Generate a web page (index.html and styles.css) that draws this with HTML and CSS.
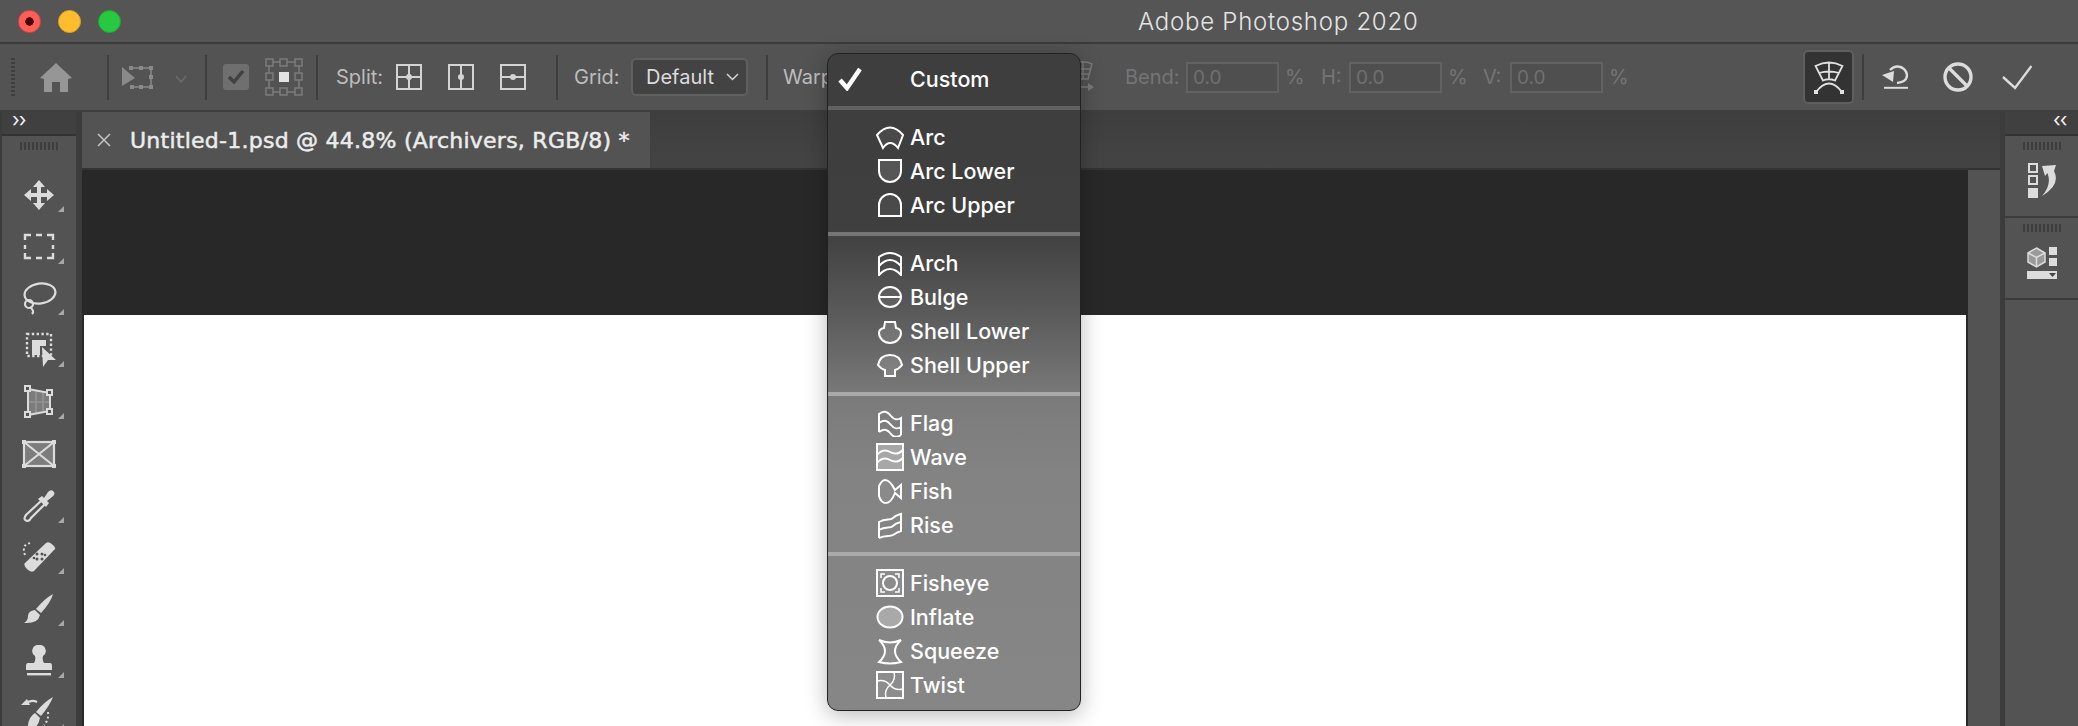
FILE: index.html
```html
<!DOCTYPE html>
<html lang="en">
<head>
    <meta charset="UTF-8">
    <title>Adobe Photoshop 2020</title>
    <link rel="stylesheet" href="styles.css">
</head>
<body>
    <div class="app">
        <header class="titlebar">
            <div class="lights">
                <span class="light red"></span>
                <span class="light yellow"></span>
                <span class="light green"></span>
            </div>
            <div class="app-title">Adobe Photoshop 2020</div>
        </header>

        <div class="options">
            <span class="grip-v"></span>
            <svg class="opt-home" width="32" height="29" viewBox="0 0 32 29"><path fill="#969696" d="M16 0 32 15 28 16V29H20V19H12V29H4V16L0 15Z"/></svg>
            <span class="sep sep-home"></span>
            <svg class="opt-transform" width="31" height="25" viewBox="0 0 31 25"><g fill="none" stroke="#8a8a8a" stroke-width="1.5"><path d="M9 3H29V22H9"/></g><g fill="#8a8a8a"><rect x="7" y="1" width="4" height="4"/><rect x="17" y="1" width="4" height="4"/><rect x="27" y="1" width="4" height="4"/><rect x="27" y="10" width="4" height="4"/><rect x="27" y="20" width="4" height="4"/><rect x="17" y="20" width="4" height="4"/><rect x="8" y="20" width="4" height="4"/><path d="M0 2 13 13 0 21Z"/></g></svg>
            <svg class="opt-chevron" width="12" height="8" viewBox="0 0 12 8"><path d="M1 1 6 7 11 1" fill="none" stroke="#6c6c6c" stroke-width="1.5"/></svg>
            <span class="sep sep-transform"></span>
            <span class="checkbox"><svg width="18" height="16" viewBox="0 0 18 16"><path d="M2 8 7 13 16 2" fill="none" stroke="#414141" stroke-width="3.5"/></svg></span>
            <svg class="opt-refpoint" width="38" height="38" viewBox="0 0 38 38"><g fill="none" stroke="#7c7c7c" stroke-width="1.5"><rect x="1" y="1" width="7" height="7"/><rect x="15" y="1" width="7" height="7"/><rect x="30" y="1" width="7" height="7"/><rect x="1" y="15" width="7" height="7"/><rect x="30" y="15" width="7" height="7"/><rect x="1" y="30" width="7" height="7"/><rect x="15" y="30" width="7" height="7"/><rect x="30" y="30" width="7" height="7"/><path d="M8 4H15M22 4H30M4 8V15M34 8V15M4 22V30M34 22V30M8 34H15M22 34H30"/></g><rect x="14" y="14" width="10" height="10" fill="#e2e2e2"/></svg>
            <span class="sep sep-refpoint"></span>
            <span class="label label-split">Split:</span>
            <svg class="opt-split" width="26" height="26" viewBox="0 0 26 26"><g fill="none" stroke="#d4d4d4" stroke-width="2"><rect x="1" y="1" width="24" height="24"/><path d="M13 1V25M1 13H25"/></g><circle cx="13" cy="13" r="3" fill="#d4d4d4"/></svg>
            <svg class="opt-split-next" width="26" height="26" viewBox="0 0 26 26"><g fill="none" stroke="#d4d4d4" stroke-width="2"><rect x="1" y="1" width="24" height="24"/><path d="M13 1V25"/></g><circle cx="13" cy="13" r="3" fill="#d4d4d4"/></svg>
            <svg class="opt-split-next" width="26" height="26" viewBox="0 0 26 26"><g fill="none" stroke="#d4d4d4" stroke-width="2"><rect x="1" y="1" width="24" height="24"/><path d="M1 13H25"/></g><circle cx="13" cy="13" r="3" fill="#d4d4d4"/></svg>
            <span class="sep sep-split"></span>
            <span class="label label-grid">Grid:</span>
            <span class="dropdown">Default<svg width="13" height="8" viewBox="0 0 13 8"><path d="M1 1 6.5 6.5 12 1" fill="none" stroke="#d4d4d4" stroke-width="1.5"/></svg></span>
            <span class="sep sep-grid"></span>
            <span class="label label-warp">Warp:</span>
            <svg class="opt-warp" width="22" height="34" viewBox="0 0 22 34"><g fill="none" stroke="#7a7a7a" stroke-width="1.5"><path d="M3 3Q11 0 19 4L15 19H6ZM4 9H18M5 14H16M10 2V19"/><path d="M4 27H17"/></g><path d="M15 23 21 27 15 31Z" fill="#7a7a7a"/></svg>
            <span class="label dim label-bend">Bend:</span>
            <span class="field">0.0</span>
            <span class="label dim unit">%</span>
            <span class="label dim label-h">H:</span>
            <span class="field">0.0</span>
            <span class="label dim unit">%</span>
            <span class="label dim label-v">V:</span>
            <span class="field">0.0</span>
            <span class="label dim unit">%</span>
            <span class="warp-toggle">
                <svg width="32" height="34" viewBox="0 0 32 34"><g fill="none" stroke="#e0e0e0" stroke-width="1.8"><path d="M2.5 6Q16 -1 29.5 6L22 20.5Q16 18 10 20.5ZM6 13Q16 10 26 13M16 2V19"/><path d="M3 32Q16 15 29 32"/></g><rect x="1" y="30" width="4" height="4" fill="#e0e0e0"/><rect x="27" y="30" width="4" height="4" fill="#e0e0e0"/></svg>
            </span>
            <span class="sep sep-toggle"></span>
            <svg class="opt-undo" width="26" height="24" viewBox="0 0 26 24"><g fill="none" stroke="#dcdcdc" stroke-width="2.4"><path d="M8 5Q12 1 16 1.5A9.500 9.500 0 0 1 25 10Q25 17 15 18"/><path d="M2 22.800H26" stroke-width="2"/></g><path d="M0 10 12 6 11 17Z" fill="#dcdcdc"/></svg>
            <svg class="opt-cancel" width="30" height="30" viewBox="0 0 30 30"><g fill="none" stroke="#dcdcdc" stroke-width="3.4"><circle cx="15" cy="15" r="13"/><path d="M6 6 24 24"/></g></svg>
            <svg class="opt-commit" width="30" height="25" viewBox="0 0 30 25"><path d="M1 12 13 23 29.5 1" fill="none" stroke="#dcdcdc" stroke-width="2.4"/></svg>
        </div>

        <div class="workspace">
            <aside class="toolbar">
                <div class="collapse-row"><span>&rsaquo;&rsaquo;</span></div>
                <div class="tool-panel">
                    <span class="grip-h"></span>
                    <div class="tool">
                        <svg width="34" height="34" viewBox="0 0 34 34"><path fill="#dcdcdc" d="M17 2 23 9H19V15H25V11L32 17 25 23V19H19V25H23L17 32 11 25H15V19H9V23L2 17 9 11V15H15V9H11Z"/></svg>
                    </div>
                    <div class="tool">
                        <svg width="34" height="34" viewBox="0 0 34 34"><path d="M9 5H3V10M14 5H20M25 5H31V10M31 15V19M31 23V28H25M20 28H14M9 28H3V23M3 19V15" fill="none" stroke="#dcdcdc" stroke-width="2.4"/></svg>
                    </div>
                    <div class="tool">
                        <svg width="36" height="34" viewBox="0 0 36 34"><g fill="none" stroke="#dcdcdc" stroke-width="2.2"><ellipse cx="19" cy="12.5" rx="15.5" ry="10" transform="rotate(-8 19 12.5)"/><circle cx="8" cy="23" r="4"/><path d="M9 26Q14 30 11 33"/></g></svg>
                    </div>
                    <div class="tool">
                        <svg width="34" height="36" viewBox="0 0 34 36"><rect x="5" y="2" width="24" height="22" fill="none" stroke="#dcdcdc" stroke-width="2.4" stroke-dasharray="2.4 2.4"/><path fill="#dcdcdc" d="M10 8H24V14H18V23H10Z"/><path fill="#dcdcdc" d="M20 15 34 28 26 28 21 35Z"/></svg>
                    </div>
                    <div class="tool">
                        <svg width="30" height="34" viewBox="0 0 30 34"><path fill="#7c7c7c" d="M4 4 26 8V26L4 30Z"/><g fill="none" stroke="#959595" stroke-width="1.5"><path d="M12 6V28M19 7V27M4 17H26"/></g><g fill="none" stroke="#dcdcdc" stroke-width="2"><path d="M4 4 26 8V26L4 30Z"/></g><g fill="#535353" stroke="#dcdcdc" stroke-width="2"><rect x="1" y="1" width="5" height="5"/><rect x="23" y="5" width="5" height="5"/><rect x="23" y="24" width="5" height="5"/><rect x="1" y="27" width="5" height="5"/></g></svg>
                    </div>
                    <div class="tool no-flyout">
                        <svg width="34" height="28" viewBox="0 0 34 28"><path fill="#7d7d7d" d="M2 2H32V26H2Z"/><g fill="none" stroke="#dcdcdc" stroke-width="2.2"><rect x="2" y="2" width="30" height="24"/><path d="M2 2 32 26M32 2 2 26"/></g><g fill="#dcdcdc"><rect width="4" height="4"/><rect x="30" width="4" height="4"/><rect y="24" width="4" height="4"/><rect x="30" y="24" width="4" height="4"/></g></svg>
                    </div>
                    <div class="tool">
                        <svg width="32" height="32" viewBox="0 0 32 32"><path d="M18 11 3 25Q0 29 3 30.5T8 28L22 14" fill="none" stroke="#dcdcdc" stroke-width="2.2"/><path fill="#dcdcdc" d="M15 9 19 6 21 8 25 2Q28 -1 30.5 1.5T29 7L24 11 26 13 23 17Z"/></svg>
                    </div>
                    <div class="tool">
                        <svg width="34" height="32" viewBox="0 0 34 32"><path d="M3 14Q-1 3 9 2" fill="none" stroke="#dcdcdc" stroke-width="2" stroke-dasharray="2 2.5"/><path fill="#dcdcdc" d="M3 22 24 2Q27 0 31 4T32 9L12 30Q9 32 5 28T3 22Z"/><g fill="#535353"><circle cx="15" cy="13" r="1.5"/><circle cx="20" cy="13" r="1.5"/><circle cx="15" cy="18" r="1.5"/><circle cx="20" cy="18" r="1.5"/><circle cx="12" cy="17" r="1.3"/><circle cx="23" cy="14" r="1.3"/></g></svg>
                    </div>
                    <div class="tool">
                        <svg width="30" height="32" viewBox="0 0 30 32"><path fill="#dcdcdc" d="M29 1Q27 9 17 20L12 16Q20 6 29 1Z"/><path fill="#dcdcdc" d="M11 17 16 22Q14 31 0 30Q4 28 4 23T11 17Z"/></svg>
                    </div>
                    <div class="tool">
                        <svg width="28" height="32" viewBox="0 0 28 32"><path fill="#dcdcdc" d="M14 0A6 6 0 0 1 18 11Q17 15 19 18H25Q27 18 27 21V25H1V21Q1 18 3 18H9Q11 15 10 11A6 6 0 0 1 14 0Z"/><rect x="2" y="28" width="24" height="2.4" fill="#dcdcdc"/></svg>
                    </div>
                    <div class="tool">
                        <svg width="36" height="34" viewBox="0 0 36 34"><path fill="#dcdcdc" d="M32 1Q29 9 20 20L15 16Q23 6 32 1Z"/><path fill="#dcdcdc" d="M14 17 19 22Q17 33 7 34Q6 22 14 17Z"/><path d="M4 8Q10 3 16 6" fill="none" stroke="#dcdcdc" stroke-width="2"/><path fill="#dcdcdc" d="M0 9H9L6 3Z"/><path d="M27 16Q28 24 23 29" fill="none" stroke="#dcdcdc" stroke-width="2" stroke-dasharray="2 2.5"/></svg>
                    </div>
                </div>
            </aside>

            <main class="document">
                <div class="tabbar">
                    <div class="tab">
                        <svg width="14" height="14" viewBox="0 0 14 14"><path d="M1 1 13 13M13 1 1 13" stroke="#c4c4c4" stroke-width="1.5"/></svg>
                        <span class="tab-title">Untitled-1.psd @ 44.8% (Archivers, RGB/8) *</span>
                    </div>
                </div>
                <div class="stage">
                    <div class="canvas-area">
                        <div class="paper"></div>
                    </div>
                    <div class="scroll-col"></div>
                </div>
            </main>

            <aside class="dock">
                <div class="collapse-row right"><span>&lsaquo;&lsaquo;</span></div>
                <div class="dock-panel">
                    <span class="grip-h"></span>
                    <svg width="30" height="35" viewBox="0 0 30 35"><g fill="none" stroke="#dcdcdc" stroke-width="2"><rect x="2" y="1" width="8" height="8"/><rect x="2" y="13" width="8" height="8"/></g><rect x="1" y="25" width="10" height="10" fill="#dcdcdc"/><path fill="#dcdcdc" d="M15 3 29 2 27 8Q34 22 15 33Q25 22 20.5 10L18 13Z"/></svg>
                </div>
                <div class="dock-panel">
                    <span class="grip-h"></span>
                    <svg class="dock-3d" width="30" height="32" viewBox="0 0 30 32"><path fill="#9a9a9a" stroke="#dcdcdc" stroke-width="1.5" d="M9.5 1 18 6V15L9.5 20 1 15V6Z"/><path d="M1 6 9.5 10.5 18 6M9.5 10.5V20" fill="none" stroke="#dcdcdc" stroke-width="1.5"/><rect x="22" y="0" width="8" height="8" fill="#dcdcdc"/><rect x="22" y="11" width="8" height="8" fill="#dcdcdc"/><rect y="24" width="30" height="8" fill="#dcdcdc"/><path d="M22 26H29L25.5 30Z" fill="#444"/></svg>
                </div>
                <div class="dock-rest"></div>
            </aside>
        </div>

        <div class="warp-menu">
            <div class="menu-head">
                <svg width="24" height="24" viewBox="0 0 24 24"><path d="M2 13 9 21 22 2" fill="none" stroke="#fff" stroke-width="4.5"/></svg>
                <span>Custom</span>
            </div>
            <div class="menu-sep first"></div>
            <div class="menu-group">
                <div class="menu-item"><svg width="28" height="28" viewBox="0 0 28 28"><path class="warp-shape" d="M1 12Q14 -3 27 12L22 25Q14 15 7 25Z"/></svg>Arc</div>
                <div class="menu-item"><svg width="28" height="28" viewBox="0 0 28 28"><path class="warp-shape mid" d="M3 3H25V14A11 11 0 0 1 3 14Z"/></svg>Arc Lower</div>
                <div class="menu-item"><svg width="28" height="28" viewBox="0 0 28 28"><path class="warp-shape" d="M3 25V14A11 11 0 0 1 25 14V25Z"/></svg>Arc Upper</div>
            </div>
            <div class="menu-sep second"></div>
            <div class="menu-group">
                <div class="menu-item"><svg width="28" height="28" viewBox="0 0 28 28"><path class="warp-line" d="M3 27V8Q14 0 25 8V27M3 17Q14 5 25 17M3 26Q14 14 25 26"/></svg>Arch</div>
                <div class="menu-item"><svg width="28" height="28" viewBox="0 0 28 28"><ellipse class="warp-shape" cx="14" cy="14" rx="11" ry="10"/><path class="warp-line" d="M3 14H25"/></svg>Bulge</div>
                <div class="menu-item"><svg width="28" height="28" viewBox="0 0 28 28"><path class="warp-shape mid" d="M9 5H19L20 11Q25 12 25 16A11 10 0 0 1 3 16Q3 12 8 11Z"/></svg>Shell Lower</div>
                <div class="menu-item"><svg width="28" height="28" viewBox="0 0 28 28"><path class="warp-shape mid" d="M9 25H19V19Q23 18 26 14Q24 4 14 4T2 14Q5 18 9 19Z"/></svg>Shell Upper</div>
            </div>
            <div class="menu-sep third"></div>
            <div class="menu-group">
                <div class="menu-item"><svg width="28" height="28" viewBox="0 0 28 28"><path class="warp-line" d="M3 23V5C9 1 12 3 15 7S22 11 25 9V26M3 14C9 10 12 12 15 16S22 20 25 18M3 23C9 19 12 21 15 25S22 28 25 26"/></svg>Flag</div>
                <div class="menu-item"><svg width="28" height="28" viewBox="0 0 28 28"><rect class="warp-shape fill" x="1" y="1" width="26" height="26"/><path class="warp-line" d="M1 12Q7 5 14 9T27 7M1 20Q7 13 14 17T27 15"/></svg>Wave</div>
                <div class="menu-item"><svg width="28" height="28" viewBox="0 0 28 28"><path class="warp-shape" d="M3 9Q6 3 9 3Q14 3 19 13L25 8V21L19 16Q15 26 10 26Q5 26 3 19Z"/></svg>Fish</div>
                <div class="menu-item"><svg width="28" height="28" viewBox="0 0 28 28"><path class="warp-line" d="M3 27V11C10 7 14 10 17 7S22 4 25 3V20C22 21 20 22 17 24S10 24 3 27M3 19C10 15 14 18 17 15S22 12 25 11"/></svg>Rise</div>
            </div>
            <div class="menu-sep third"></div>
            <div class="menu-group">
                <div class="menu-item"><svg width="28" height="28" viewBox="0 0 28 28"><rect class="warp-shape" x="1" y="1" width="26" height="26"/><circle class="warp-line" cx="14" cy="14" r="7"/><path class="warp-line thin" d="M5 9V5H9M19 5H23V9M5 19V23H9M19 23H23V19"/></svg>Fisheye</div>
                <div class="menu-item"><svg width="28" height="28" viewBox="0 0 28 28"><ellipse class="warp-shape fill" cx="14" cy="14" rx="12.5" ry="10.5"/></svg>Inflate</div>
                <div class="menu-item"><svg width="28" height="28" viewBox="0 0 28 28"><path class="warp-shape" d="M3 3Q14 8 25 3Q13 14 25 25Q14 28 3 25Q15 14 3 3Z"/></svg>Squeeze</div>
                <div class="menu-item"><svg width="28" height="28" viewBox="0 0 28 28"><rect class="warp-shape" x="1" y="1" width="26" height="26"/><path class="warp-line thin" d="M14 14Q20 9 18 1M14 14Q19 20 27 18M14 14Q8 19 10 27M14 14Q9 8 1 10"/></svg>Twist</div>
            </div>
        </div>
    </div>
</body>
</html>
```

FILE: styles.css
```css
* {
    box-sizing: border-box;
}

html, body {
    margin: 0;
    padding: 0;
    background: #535353;
}

body {
    font-family: Inter, "Liberation Sans", sans-serif;
    color: #dcdcdc;
    width: 2078px;
    height: 726px;
    overflow: hidden;
}

.app {
    position: relative;
    display: flex;
    flex-direction: column;
    width: 2078px;
    height: 726px;
    overflow: hidden;
    background: #535353;
}

/* title bar */

.titlebar {
    display: flex;
    align-items: center;
    height: 44px;
    flex: none;
    border-bottom: 2px solid #3b3b3b;
    background: #555555;
}

.lights {
    display: flex;
    gap: 17px;
    padding-left: 18px;
    width: 1138px;
}

.light {
    width: 23px;
    height: 23px;
    border-radius: 50%;
}

.light.red {
    background: radial-gradient(circle, #4d0000 0 4px, #ff5f57 4.5px);
    border: 1px solid #e0443e;
}

.light.yellow {
    background: #ffbd2e;
    border: 1px solid #dea123;
}

.light.green {
    background: #28c940;
    border: 1px solid #1aab29;
}

.app-title {
    font-size: 24px;
    font-weight: 300;
    letter-spacing: 0.75px;
    color: #e4e4e4;
}

/* options bar */

.options {
    display: flex;
    align-items: center;
    height: 68px;
    flex: none;
    padding-left: 11px;
    border-bottom: 2px solid #3f3f3f;
    background: #535353;
}

.options svg {
    flex: none;
}

.grip-v {
    flex: none;
    width: 4px;
    height: 38px;
    background: repeating-linear-gradient(to bottom, #3e3e3e 0 2px, transparent 2px 4px);
}

.sep {
    flex: none;
    width: 2px;
    height: 45px;
    background: #3e3e3e;
}

.opt-home { margin-left: 25px; }
.sep-home { margin-left: 35px; }
.opt-transform { margin-left: 13px; }
.opt-chevron { margin-left: 22px; margin-top: 4px; }
.sep-transform { margin-left: 18px; }
.checkbox {
    display: flex;
    align-items: center;
    justify-content: center;
    flex: none;
    width: 26px;
    height: 26px;
    margin-left: 16px;
    border-radius: 3px;
    background: #6f6f6f;
}
.opt-refpoint { margin-left: 16px; }
.sep-refpoint { margin-left: 13px; }

.label {
    flex: none;
    font-size: 20px;
    white-space: nowrap;
    color: #bdbdbd;
}

.label.dim {
    color: #757575;
}

.label-split { width: 47px; margin-left: 18px; }
.opt-split { margin-left: 13px; }
.opt-split-next { margin-left: 26px; }
.sep-split { margin-left: 30px; }
.label-grid { width: 45px; margin-left: 16px; }

.dropdown {
    display: flex;
    align-items: center;
    justify-content: space-between;
    flex: none;
    width: 117px;
    height: 38px;
    margin-left: 12px;
    padding: 0 7px 0 13px;
    border: 2px solid #5f5f5f;
    border-radius: 5px;
    background: #434343;
    font-size: 20px;
    color: #dcdcdc;
}

.sep-grid { margin-left: 18px; }
.label-warp { width: 50px; margin-left: 15px; }
.opt-warp { margin-left: 240px; }
.label-bend { width: 54px; margin-left: 30px; }
.label-h { width: 21px; margin-left: 20px; }
.label-v { width: 20px; margin-left: 19px; }

.field {
    flex: none;
    width: 93px;
    height: 31px;
    margin-left: 7px;
    padding-left: 5px;
    border: 2px solid #626262;
    background: #4f4f4f;
    font-size: 19px;
    line-height: 27px;
    color: #707070;
}

.unit { width: 16px; margin-left: 6px; }

.warp-toggle {
    display: flex;
    align-items: center;
    justify-content: center;
    flex: none;
    width: 51px;
    height: 54px;
    margin-left: 178px;
    border: 2px solid #5f5f5f;
    border-radius: 5px;
    background: #333333;
}

.sep-toggle { margin-left: 8px; height: 46px; }
.opt-undo { margin-left: 18px; }
.opt-cancel { margin-left: 35px; }
.opt-commit { margin-left: 29px; }

/* work area */

.workspace {
    display: flex;
    flex: 1;
    min-height: 0;
}

.toolbar {
    flex: none;
    width: 82px;
    padding-left: 2px;
    border-right: 6px solid #3c3c3c;
    background: #3c3c3c;
}

.collapse-row {
    height: 24px;
    padding-left: 10px;
    border-bottom: 2px solid #333333;
    background: #404040;
    font-size: 20px;
    line-height: 17px;
    letter-spacing: -1px;
    color: #f0f0f0;
}

.collapse-row.right {
    padding-left: 48px;
}

.tool-panel {
    display: flex;
    flex-direction: column;
    height: 590px;
    background: #535353;
}

.grip-h {
    flex: none;
    width: 38px;
    height: 8px;
    background: repeating-linear-gradient(to right, #3e3e3e 0 2px, transparent 2px 4px);
}

.tool-panel .grip-h {
    margin: 6px 0 19px 18px;
}

.tool {
    position: relative;
    display: flex;
    align-items: center;
    justify-content: center;
    flex: none;
    width: 74px;
    height: 51.8px;
}

.tool::after {
    content: "";
    position: absolute;
    right: 12px;
    bottom: 9px;
    border-style: solid;
    border-width: 0 0 6px 6px;
    border-color: transparent transparent #a8a8a8 transparent;
}

.tool.no-flyout::after {
    display: none;
}

.document {
    display: flex;
    flex-direction: column;
    width: 1918px;
    flex: none;
}

.tabbar {
    flex: none;
    height: 58px;
    border-bottom: 2px solid #333333;
    background: linear-gradient(to bottom, #3e3e3e, #444444);
}

.tab {
    display: flex;
    align-items: center;
    width: 568px;
    height: 56px;
    padding-left: 15px;
    background: #535353;
}

.tab-title {
    margin-left: 19px;
    font-family: "DejaVu Sans", sans-serif;
    font-size: 22px;
    letter-spacing: 0.25px;
    color: #ececec;
    -webkit-text-stroke: 0.5px #ececec;
}

.stage {
    display: flex;
    flex: 1;
}

.canvas-area {
    flex: none;
    width: 1886px;
    padding: 145px 2px 0 2px;
    background: #282828;
}

.paper {
    height: 100%;
    background: #ffffff;
}

.scroll-col {
    flex: 1;
    background: #535353;
}

.dock {
    display: flex;
    flex-direction: column;
    flex: none;
    width: 78px;
    padding-left: 5px;
    background: #3c3c3c;
}

.dock .collapse-row {
    flex: none;
}

.dock-panel {
    display: flex;
    flex-direction: column;
    align-items: center;
    flex: none;
    height: 82px;
    border-bottom: 2px solid #3c3c3c;
    background: #535353;
    gap: 13px;
    padding-top: 6px;
}

.dock-3d {
    margin-top: 2px;
}

.dock-rest {
    flex: 1;
    background: #535353;
}

/* warp dropdown */

.warp-menu {
    position: absolute;
    top: 53px;
    left: 827px;
    width: 254px;
    height: 658px;
    border: 1px solid #222222;
    border-radius: 11px;
    overflow: hidden;
    background: linear-gradient(to bottom, #3e3e3e 0, #3f3f3f 175px, #5b5b5b 262px, #7b7b7b 345px, #838383 420px, #868686 100%);
    box-shadow: 0 4px 22px rgba(0, 0, 0, 0.28);
}

.menu-head {
    display: flex;
    align-items: center;
    height: 52px;
    padding: 0 0 2px 10px;
    font-size: 21.5px;
    font-weight: 500;
    color: #ffffff;
}

.menu-head span {
    margin-left: 48px;
}

.menu-sep {
    height: 4px;
}

.menu-sep.first { background: #616161; }
.menu-sep.second { background: #757575; }
.menu-sep.third { background: #aaaaaa; }

.menu-group {
    padding: 10px 0;
}

.menu-item {
    display: flex;
    align-items: center;
    height: 34px;
    padding-left: 48px;
    font-size: 21.5px;
    font-weight: 500;
    color: #ffffff;
}

.menu-item svg {
    flex: none;
    margin-right: 6px;
}

.warp-shape {
    fill: rgba(255, 255, 255, 0.06);
    stroke: #ffffff;
    stroke-width: 2;
}

.warp-shape.mid {
    fill: rgba(255, 255, 255, 0.12);
}

.warp-shape.fill {
    fill: rgba(255, 255, 255, 0.3);
}

.warp-line {
    fill: none;
    stroke: #ffffff;
    stroke-width: 2;
}

.warp-line.thin {
    stroke-width: 1.5;
}
```
